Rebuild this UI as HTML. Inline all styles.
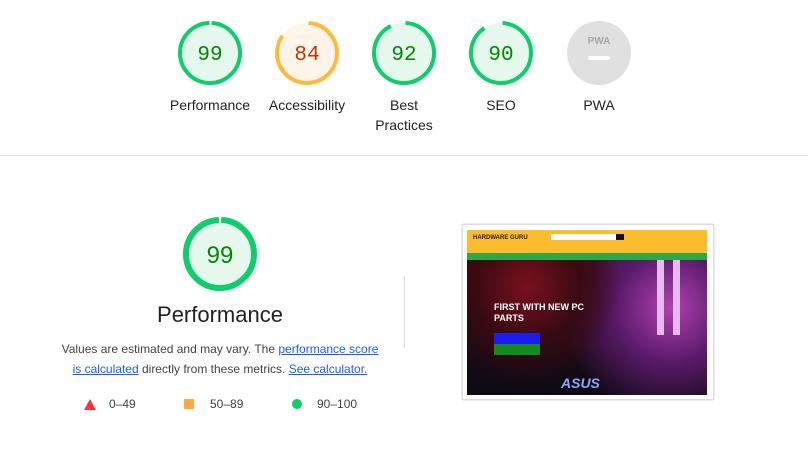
<!DOCTYPE html>
<html><head><meta charset="utf-8"><style>
body{margin:0;width:808px;height:474px;background:#fff;font-family:"Liberation Sans",Arial,sans-serif;position:relative;overflow:hidden}
.g{position:absolute;text-align:center;width:100px}
.g svg{display:block;margin:0 auto}
.lbl{font-size:14px;color:#212121;line-height:20px;margin-top:9px}
a{color:#1a5cff;text-decoration:underline}
</style></head><body>

<div class="g" style="left:160px;top:20px"><svg width="66" height="66" viewBox="0 0 66 66"><circle cx="33" cy="33" r="30" fill="#e6f8ee"/><circle cx="33" cy="33" r="30" fill="none" stroke="#0cce6b" stroke-width="4" stroke-dasharray="186 200" transform="rotate(-87 33 33)"/><text x="33" y="40" text-anchor="middle" font-family="Liberation Mono" font-size="21" fill="#008800">99</text></svg><div class="lbl">Performance</div></div>
<div class="g" style="left:257px;top:20px"><svg width="66" height="66" viewBox="0 0 66 66"><circle cx="33" cy="33" r="30" fill="#fff4ea"/><circle cx="33" cy="33" r="30" fill="none" stroke="#ffa400" stroke-opacity=".75" stroke-width="4" stroke-dasharray="158 200" transform="rotate(-87 33 33)"/><text x="33" y="40" text-anchor="middle" font-family="Liberation Mono" font-size="21" fill="#c33300">84</text></svg><div class="lbl">Accessibility</div></div>
<div class="g" style="left:354px;top:20px"><svg width="66" height="66" viewBox="0 0 66 66"><circle cx="33" cy="33" r="30" fill="#e6f8ee"/><circle cx="33" cy="33" r="30" fill="none" stroke="#0cce6b" stroke-width="4" stroke-dasharray="173 200" transform="rotate(-87 33 33)"/><text x="33" y="40" text-anchor="middle" font-family="Liberation Mono" font-size="21" fill="#008800">92</text></svg><div class="lbl">Best<br>Practices</div></div>
<div class="g" style="left:451px;top:20px"><svg width="66" height="66" viewBox="0 0 66 66"><circle cx="33" cy="33" r="30" fill="#e6f8ee"/><circle cx="33" cy="33" r="30" fill="none" stroke="#0cce6b" stroke-width="4" stroke-dasharray="169 200" transform="rotate(-87 33 33)"/><text x="33" y="40" text-anchor="middle" font-family="Liberation Mono" font-size="21" fill="#008800">90</text></svg><div class="lbl">SEO</div></div>
<div class="g" style="left:549px;top:20px"><svg width="66" height="66" viewBox="0 0 66 66"><circle cx="33" cy="33" r="32" fill="#e0e0e0"/><text x="33" y="24" text-anchor="middle" font-family="Liberation Sans" font-weight="bold" font-size="10" fill="#a8a8a8">PWA</text><rect x="22" y="36" width="22" height="4" rx="2" fill="#fff"/></svg><div class="lbl">PWA</div></div>

<div style="position:absolute;left:0;top:155px;width:808px;height:1px;background:#e0e0e0"></div>

<svg style="position:absolute;left:182px;top:216px" width="76" height="76" viewBox="0 0 76 76"><circle cx="38" cy="38" r="34" fill="#e6f8ee"/><circle cx="38" cy="38" r="34" fill="none" stroke="#0cce6b" stroke-width="6" stroke-dasharray="211 220" transform="rotate(-88 38 38)"/><text x="38" y="47" text-anchor="middle" font-family="Liberation Sans" font-size="24" fill="#008800">99</text></svg>
<div style="position:absolute;left:120px;top:302px;width:200px;text-align:center;font-size:22px;color:#212121">Performance</div>
<div style="position:absolute;left:55px;top:339px;width:330px;text-align:center;font-size:12px;line-height:20px;color:#424242">Values are estimated and may vary. The <a>performance score</a><br><a>is calculated</a> directly from these metrics. <a>See calculator.</a></div>
<div style="position:absolute;top:396px;left:84px;font-size:12px;color:#424242;line-height:16px">
<svg style="position:absolute;left:0;top:3px" width="12" height="11"><polygon points="6,0 12,11 0,11" fill="#ff3333"/></svg>
<span style="position:absolute;left:25px;white-space:nowrap">0–49</span>
<div style="position:absolute;left:100px;top:3px;width:10px;height:10px;background:#ffa93f"></div>
<span style="position:absolute;left:126px;white-space:nowrap">50–89</span>
<div style="position:absolute;left:208px;top:3px;width:10px;height:10px;border-radius:50%;background:#0cce6b"></div>
<span style="position:absolute;left:233px;white-space:nowrap">90–100</span>
</div>

<div style="position:absolute;left:404px;top:276px;width:1px;height:72px;background:#e0e0e0"></div>

<div style="position:absolute;left:462px;top:224px;width:250px;height:174px;border:1px solid #ddd;background:#fff;box-shadow:0 0 2px #ccc">
 <div style="position:absolute;left:4px;top:5px;width:240px;height:165px;background:#111;overflow:hidden">
  <div style="position:absolute;left:0;top:0;width:240px;height:23px;background:#fbbd2e"></div>
  <div style="position:absolute;left:6px;top:5px;font-size:6px;font-weight:bold;color:#222">HARDWARE GURU</div>
  <div style="position:absolute;left:84px;top:4px;width:65px;height:6px;background:#fff"></div>
  <div style="position:absolute;left:149px;top:4px;width:8px;height:6px;background:#111"></div>
  <div style="position:absolute;left:0;top:23px;width:240px;height:7px;background:#2aa84a"></div>
  <div style="position:absolute;left:0;top:30px;width:240px;height:135px;background:radial-gradient(circle at 25% 20%,#7a1020 0,#3a0a12 25%,transparent 45%),radial-gradient(circle at 85% 35%,#b040b0 0,#5a1a6a 25%,transparent 50%),linear-gradient(180deg,#2a0e18,#1a0a14 60%,#0e0a14)"></div>
  <div style="position:absolute;left:190px;top:30px;width:7px;height:75px;background:#e8b8f0"></div>
  <div style="position:absolute;left:206px;top:30px;width:7px;height:75px;background:#e8b8f0"></div>
  <div style="position:absolute;left:27px;top:72px;font-size:9px;font-weight:bold;color:#fff;line-height:11px">FIRST WITH NEW PC<br>PARTS</div>
  <div style="position:absolute;left:27px;top:103px;width:46px;height:11px;background:#1c1cf0"></div>
  <div style="position:absolute;left:27px;top:114px;width:46px;height:11px;background:#138a1c"></div>
  <div style="position:absolute;left:94px;top:145px;font-size:14px;font-weight:bold;font-style:italic;color:#8aa8ff">ASUS</div>
 </div>
</div>
</body></html>
